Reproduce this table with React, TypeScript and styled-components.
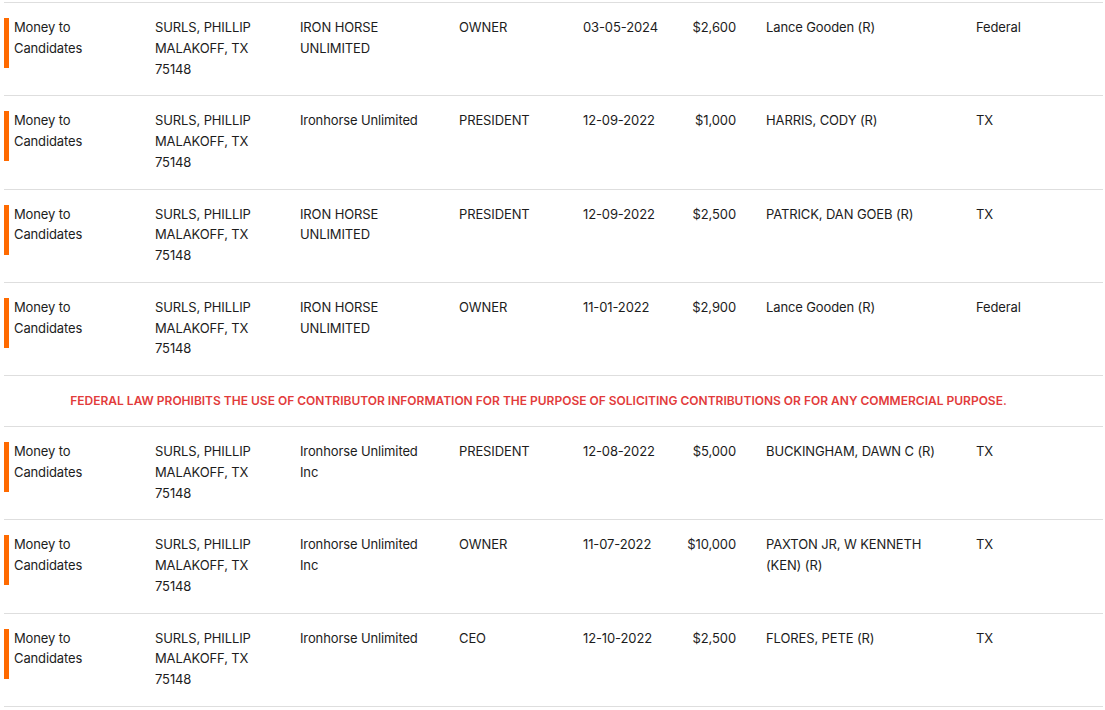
import React from 'react'
import styled, { createGlobalStyle } from 'styled-components'

interface Contribution {
    type: string
    contributor: string[]
    employer: string
    occupation: string
    date: string
    amount: string
    recipient: string
    jurisdiction: string
}

const COLUMNS = '141px 145px 159px 124px 110px 73px 210px 137px'

const rowsBefore: Contribution[] = [
    {
        type: 'Money to Candidates',
        contributor: ['SURLS, PHILLIP', 'MALAKOFF, TX', '75148'],
        employer: 'IRON HORSE UNLIMITED',
        occupation: 'OWNER',
        date: '03-05-2024',
        amount: '$2,600',
        recipient: 'Lance Gooden (R)',
        jurisdiction: 'Federal',
    },
    {
        type: 'Money to Candidates',
        contributor: ['SURLS, PHILLIP', 'MALAKOFF, TX', '75148'],
        employer: 'Ironhorse Unlimited',
        occupation: 'PRESIDENT',
        date: '12-09-2022',
        amount: '$1,000',
        recipient: 'HARRIS, CODY (R)',
        jurisdiction: 'TX',
    },
    {
        type: 'Money to Candidates',
        contributor: ['SURLS, PHILLIP', 'MALAKOFF, TX', '75148'],
        employer: 'IRON HORSE UNLIMITED',
        occupation: 'PRESIDENT',
        date: '12-09-2022',
        amount: '$2,500',
        recipient: 'PATRICK, DAN GOEB (R)',
        jurisdiction: 'TX',
    },
    {
        type: 'Money to Candidates',
        contributor: ['SURLS, PHILLIP', 'MALAKOFF, TX', '75148'],
        employer: 'IRON HORSE UNLIMITED',
        occupation: 'OWNER',
        date: '11-01-2022',
        amount: '$2,900',
        recipient: 'Lance Gooden (R)',
        jurisdiction: 'Federal',
    },
]

const rowsAfter: Contribution[] = [
    {
        type: 'Money to Candidates',
        contributor: ['SURLS, PHILLIP', 'MALAKOFF, TX', '75148'],
        employer: 'Ironhorse Unlimited Inc',
        occupation: 'PRESIDENT',
        date: '12-08-2022',
        amount: '$5,000',
        recipient: 'BUCKINGHAM, DAWN C (R)',
        jurisdiction: 'TX',
    },
    {
        type: 'Money to Candidates',
        contributor: ['SURLS, PHILLIP', 'MALAKOFF, TX', '75148'],
        employer: 'Ironhorse Unlimited Inc',
        occupation: 'OWNER',
        date: '11-07-2022',
        amount: '$10,000',
        recipient: 'PAXTON JR, W KENNETH (KEN) (R)',
        jurisdiction: 'TX',
    },
    {
        type: 'Money to Candidates',
        contributor: ['SURLS, PHILLIP', 'MALAKOFF, TX', '75148'],
        employer: 'Ironhorse Unlimited',
        occupation: 'CEO',
        date: '12-10-2022',
        amount: '$2,500',
        recipient: 'FLORES, PETE (R)',
        jurisdiction: 'TX',
    },
]

const ContributionRow = ({ row }: { row: Contribution }) => (
    <Row>
        <TypeCell>
            <TypeLabel>{row.type}</TypeLabel>
        </TypeCell>
        <Cell>
            {row.contributor.map((line, i) => (
                <Line key={i}>{line}</Line>
            ))}
        </Cell>
        <Cell>{row.employer}</Cell>
        <Cell>{row.occupation}</Cell>
        <Cell>{row.date}</Cell>
        <AmountCell>{row.amount}</AmountCell>
        <Cell>{row.recipient}</Cell>
        <Cell>{row.jurisdiction}</Cell>
    </Row>
)

export default function App() {
    return (
        <>
            <GlobalStyle />
            <Table>
                {rowsBefore.map((row, i) => (
                    <ContributionRow key={`b${i}`} row={row} />
                ))}
                <NoticeRow>
                    FEDERAL LAW PROHIBITS THE USE OF CONTRIBUTOR INFORMATION FOR
                    THE PURPOSE OF SOLICITING CONTRIBUTIONS OR FOR ANY COMMERCIAL
                    PURPOSE.
                </NoticeRow>
                {rowsAfter.map((row, i) => (
                    <ContributionRow key={`a${i}`} row={row} />
                ))}
            </Table>
        </>
    )
}

const GlobalStyle = createGlobalStyle`
    html, body {
        margin: 0;
        padding: 0;
        background: #ffffff;
    }

    body {
        font-family: Inter, 'Liberation Sans', sans-serif;
        color: #1c1c1c;
        overflow: hidden;
    }
`

const Table = styled.div`
    margin: 2px 2px 0 4px;
    width: 1099px;
    border-top: 1px solid #dedede;
`

const Row = styled.div`
    display: grid;
    grid-template-columns: ${COLUMNS};
    padding: 14px 0 16px;
    border-bottom: 1px solid #dedede;
    font-size: 13px;
    line-height: 20.75px;
    letter-spacing: -0.12px;
`

const Cell = styled.div`
    padding: 0 20px 0 10px;
`

const TypeCell = styled.div`
    padding: 0 10px 0 0;
`

const TypeLabel = styled.div`
    position: relative;
    padding-left: 10px;

    &::before {
        content: '';
        position: absolute;
        left: 0;
        top: 1px;
        width: 5px;
        height: 50px;
        background: #ff6a00;
    }
`

const AmountCell = styled(Cell)`
    text-align: right;
    padding: 0 20px 0 0;
`

const Line = styled.div``

const NoticeRow = styled.div`
    display: flex;
    align-items: center;
    justify-content: center;
    height: 49px;
    padding: 0 30px 1px 0;
    border-bottom: 1px solid #dedede;
    color: #e23b3b;
    font-size: 12px;
    font-weight: 600;
`
